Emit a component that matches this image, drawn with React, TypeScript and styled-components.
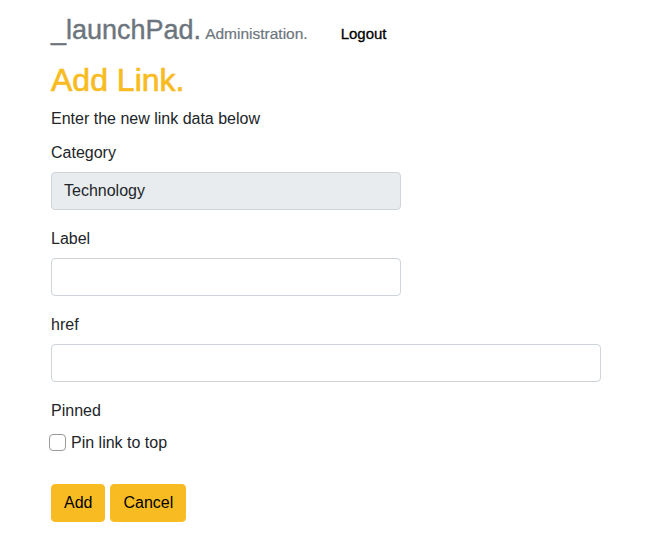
import React from "react";
import styled, { createGlobalStyle } from "styled-components";

const GlobalStyle = createGlobalStyle`
  body {
    margin: 0;
    background: #fff;
    color: #212529;
    font-family: "Liberation Sans", Arial, sans-serif;
    font-size: 16px;
  }
`;

const accent = "#f8bc22";

const Page = styled.div`
  padding: 14px 51px 0;
`;

const Navbar = styled.nav`
  display: flex;
  align-items: baseline;
  gap: 33px;
  margin-bottom: 15px;
`;

const Brand = styled.div`
  display: flex;
  align-items: baseline;
  gap: 4px;
  color: #6c757d;
`;

const BrandName = styled.span`
  font-size: 27px;
  line-height: 1.2;
  -webkit-text-stroke: 0.4px #6c757d;
`;

const BrandSub = styled.span`
  font-size: 15.5px;
  -webkit-text-stroke: 0.2px #6c757d;
`;

const NavLink = styled.a`
  color: #000;
  font-size: 15px;
  text-decoration: none;
  cursor: pointer;
  -webkit-text-stroke: 0.3px #000;
`;

const Title = styled.h1`
  margin: 0 0 6px;
  font-size: 32px;
  line-height: 1.2;
  font-weight: 500;
  color: ${accent};
  -webkit-text-stroke: 0.7px ${accent};
`;

const Intro = styled.p`
  margin: 0 0 8px;
  line-height: 26px;
`;

const Form = styled.form`
  display: flex;
  flex-direction: column;
`;

const Field = styled.div`
  margin-bottom: 16px;
`;

const Label = styled.label`
  display: block;
  line-height: 26px;
  margin-bottom: 6px;
`;

const Input = styled.input<{ $width: number }>`
  box-sizing: border-box;
  display: block;
  width: ${(p) => p.$width}px;
  height: 38px;
  padding: 6px 12px;
  font-family: inherit;
  font-size: 16px;
  color: #212529;
  background: #fff;
  border: 1px solid #ced4da;
  border-radius: 4px;
  outline: none;

  &:disabled {
    background: #e9ecef;
    opacity: 1;
  }
`;

const CheckRow = styled.div`
  display: flex;
  align-items: center;
  gap: 5px;
  margin-left: -2px;
  line-height: 26px;
  margin-bottom: 28px;
`;

const Checkbox = styled.input`
  appearance: none;
  box-sizing: border-box;
  width: 17px;
  height: 17px;
  margin: 0;
  border: 1px solid #9a9a9a;
  border-radius: 4px;
  background: #fff;
`;

const Actions = styled.div`
  display: flex;
  gap: 5px;
`;

const Button = styled.button`
  height: 38px;
  padding: 6px 12px;
  font-family: inherit;
  font-size: 16px;
  color: #000;
  background: ${accent};
  border: 1px solid ${accent};
  border-radius: 4px;
  cursor: pointer;
`;

const App = () => {
  const [label, setLabel] = React.useState("");
  const [href, setHref] = React.useState("");
  const [pinned, setPinned] = React.useState(false);

  return (
    <Page>
      <GlobalStyle />
      <Navbar>
        <Brand>
          <BrandName>_launchPad.</BrandName>
          <BrandSub>Administration.</BrandSub>
        </Brand>
        <NavLink>Logout</NavLink>
      </Navbar>
      <Title>Add Link.</Title>
      <Intro>Enter the new link data below</Intro>
      <Form onSubmit={(e) => e.preventDefault()}>
        <Field>
          <Label>Category</Label>
          <Input $width={350} value="Technology" disabled readOnly />
        </Field>
        <Field>
          <Label>Label</Label>
          <Input
            $width={350}
            value={label}
            onChange={(e) => setLabel(e.target.value)}
          />
        </Field>
        <Field>
          <Label>href</Label>
          <Input
            $width={550}
            value={href}
            onChange={(e) => setHref(e.target.value)}
          />
        </Field>
        <Label>Pinned</Label>
        <CheckRow>
          <Checkbox
            type="checkbox"
            id="pinned"
            checked={pinned}
            onChange={(e) => setPinned(e.target.checked)}
          />
          <label htmlFor="pinned">Pin link to top</label>
        </CheckRow>
        <Actions>
          <Button type="submit">Add</Button>
          <Button type="button">Cancel</Button>
        </Actions>
      </Form>
    </Page>
  );
};

export default App;
